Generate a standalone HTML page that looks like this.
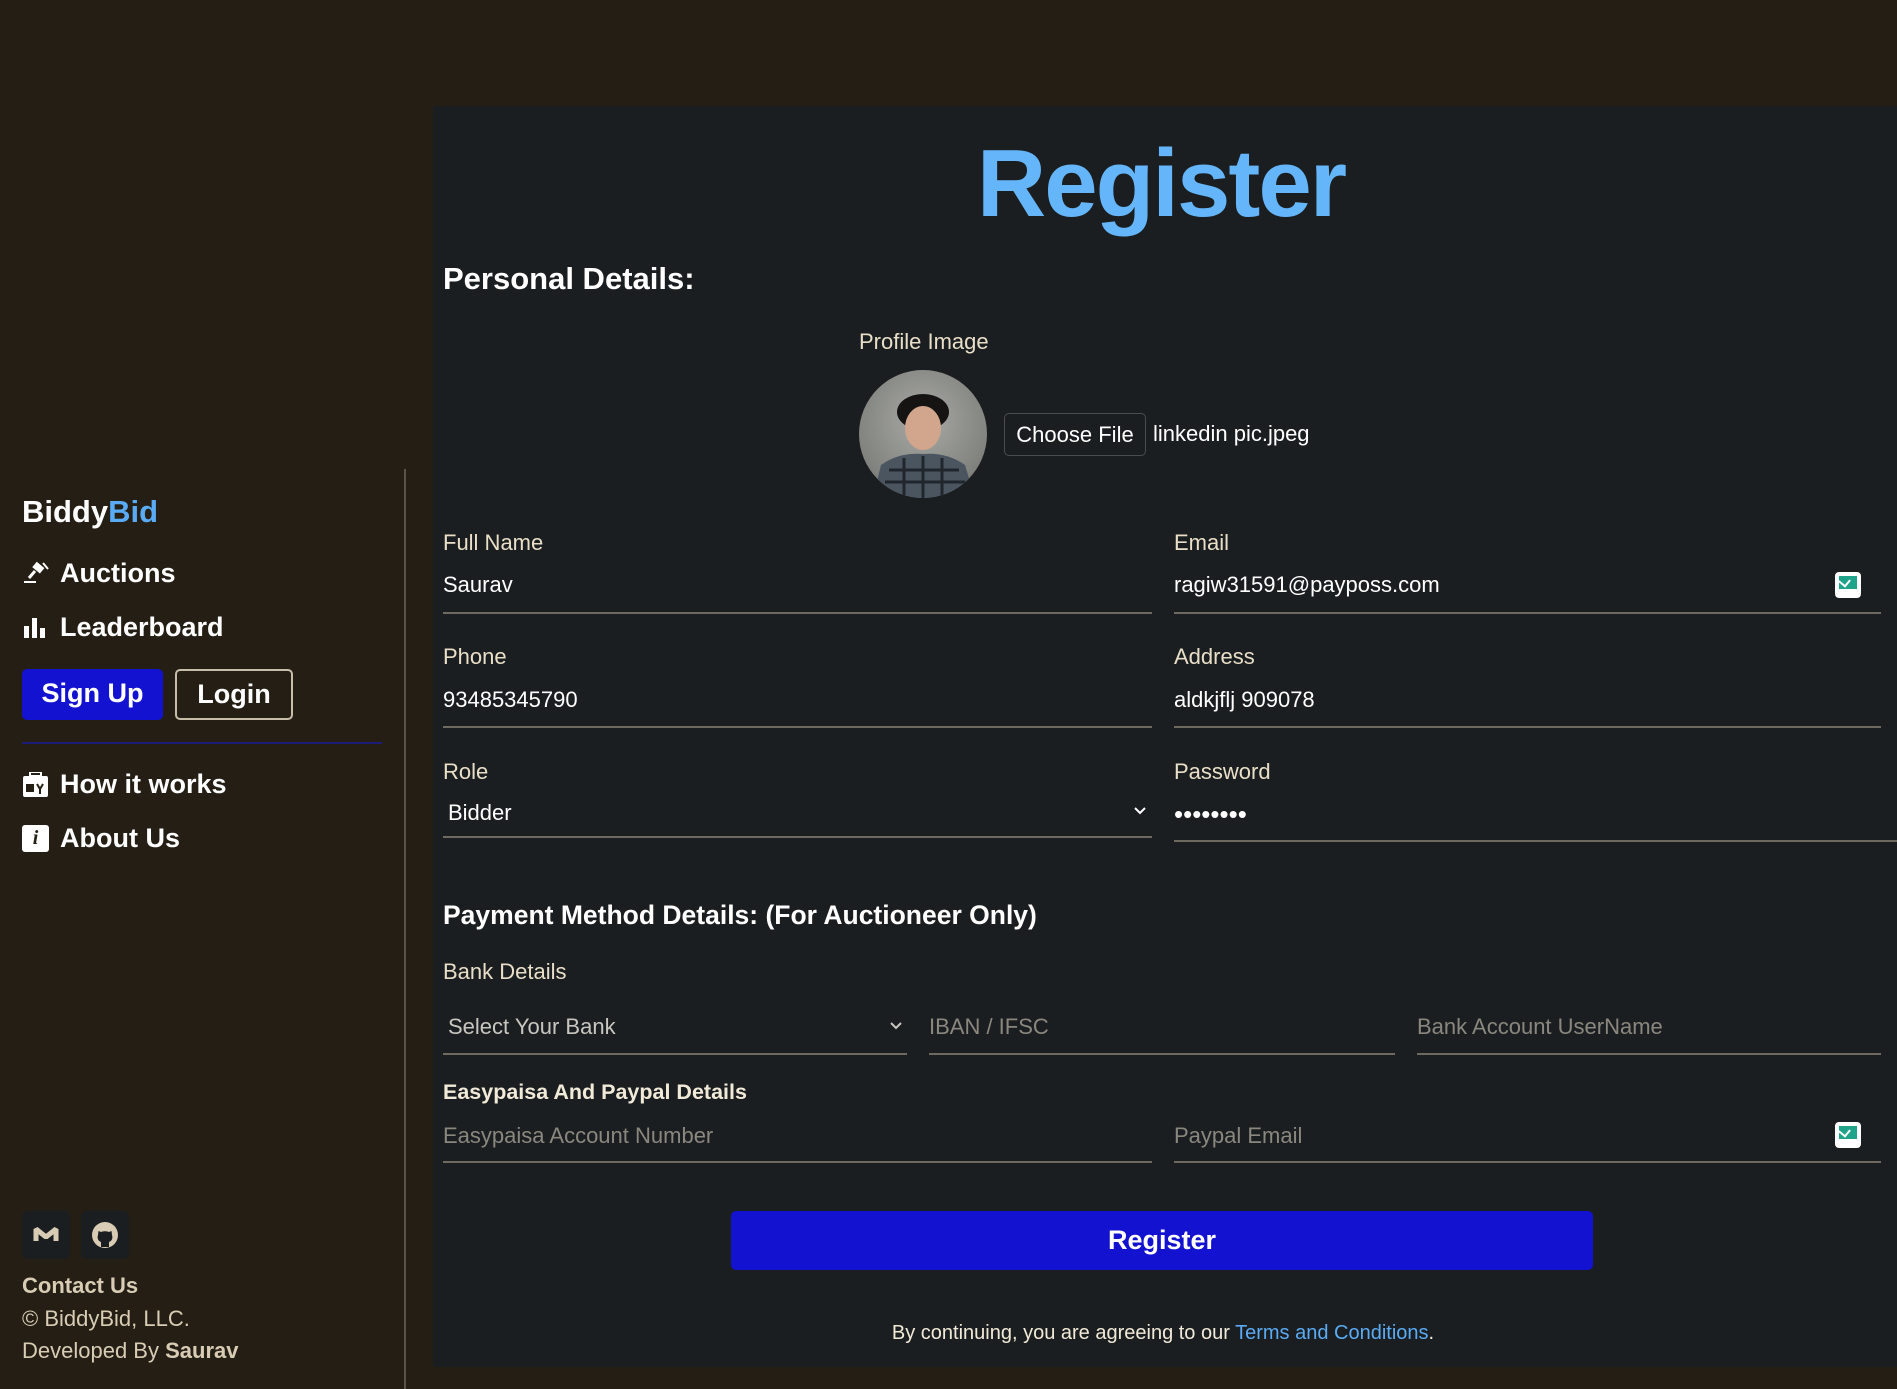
<!DOCTYPE html>
<html><head><meta charset="utf-8"><style>
*{margin:0;padding:0;box-sizing:border-box}
body{width:1897px;height:1389px;background:#241e14;font-family:"Liberation Sans",sans-serif;position:relative;overflow:hidden;color:#e9dfc8}
.a{position:absolute;white-space:nowrap}
.main{position:absolute;left:433px;top:106px;width:1464px;height:1261px;background:#1b1e20}
.lbl{font-size:22px;color:#e9dfc8;line-height:26px}
.val{font-size:22px;color:#fff;line-height:26px}
.ph{font-size:22px;color:#8a877f;line-height:26px}
.ul{position:absolute;height:2px;background:#6e6a60}
.nav{font-size:27px;font-weight:bold;color:#fff;line-height:32px}
.mail{position:absolute;width:26px;height:26px;background:#fff;border-radius:4px}
.mail:before{content:"";position:absolute;left:4px;top:4px;width:18px;height:13px;background:#1fa38a}
.mail:after{content:"";position:absolute;left:9px;top:3px;width:7px;height:7px;border-right:2px solid #fff;border-bottom:2px solid #fff;transform:rotate(40deg);transform-origin:0 0}
</style></head><body>
<div style="position:absolute;left:404px;top:469px;width:2px;height:920px;background:#5a5448"></div>
<div class="a" style="left:22px;top:492px;font-size:31px;font-weight:bold;color:#fff;line-height:40px">Biddy<span style="color:#5aabf5">Bid</span></div>
<svg class="a" style="left:23px;top:561px" width="26" height="24" viewBox="0 0 26 24"><rect x="10" y="3" width="10" height="7" fill="#fff" transform="rotate(40 15 7)"/><path d="M12 10 L6 17" stroke="#fff" stroke-width="3"/><rect x="1" y="20" width="12" height="2" fill="#fff"/><path d="M20 2 L25 8" stroke="#fff" stroke-width="2"/></svg>
<div class="a nav" style="left:60px;top:557px">Auctions</div>
<svg class="a" style="left:23px;top:616px" width="24" height="22"><rect x="1" y="10" width="5" height="12" fill="#fff"/><rect x="9" y="2" width="5" height="20" fill="#fff"/><rect x="17" y="12" width="5" height="10" fill="#fff"/></svg>
<div class="a nav" style="left:60px;top:611px">Leaderboard</div>
<div class="a" style="left:22px;top:669px;width:141px;height:51px;background:#1212d0;border-radius:5px;font-size:27px;font-weight:bold;color:#fff;text-align:center;line-height:49px">Sign Up</div>
<div class="a" style="left:175px;top:669px;width:118px;height:51px;border:2px solid #c8bda8;border-radius:5px;font-size:27px;font-weight:bold;color:#fff;text-align:center;line-height:47px">Login</div>
<div class="a" style="left:22px;top:742px;width:360px;height:2px;background:#1d1d78"></div>
<svg class="a" style="left:22px;top:772px" width="27" height="25"><rect x="8" y="0" width="11" height="4" fill="none" stroke="#fff" stroke-width="2"/><rect x="1" y="4" width="25" height="21" rx="2" fill="#fff"/><rect x="4" y="12" width="8" height="8" fill="#241e14"/><path d="M15 12 L18 17 L21 12 M18 17 V22" stroke="#241e14" stroke-width="2" fill="none"/></svg>
<div class="a nav" style="left:60px;top:768px">How it works</div>
<div class="a" style="left:22px;top:825px;width:27px;height:27px;background:#fff;border-radius:3px;color:#241e14;font:italic bold 20px 'Liberation Serif',serif;text-align:center;line-height:27px">i</div>
<div class="a nav" style="left:60px;top:822px">About Us</div>
<div class="a" style="left:22px;top:1211px;width:48px;height:48px;background:#1b1e20;border-radius:5px"><svg width="48" height="48"><path d="M14 30 V18 L24 26 L34 18 V30" stroke="#d8ccb4" stroke-width="5" fill="none" stroke-linejoin="bevel"/></svg></div>
<div class="a" style="left:81px;top:1211px;width:48px;height:48px;background:#1b1e20;border-radius:5px"><svg width="48" height="48" viewBox="0 0 48 48"><circle cx="24" cy="24" r="13" fill="#d8ccb4"/><path d="M20 36 V31 C17 30 16 27 17 24 L17.5 20 L20 21 C22.5 20 25.5 20 28 21 L30.5 20 L31 24 C32 27 31 30 28 31 V36Z" fill="#1b1e20"/></svg></div>
<div class="a" style="left:22px;top:1272px;font-size:22px;font-weight:bold;color:#d8ccb4;line-height:28px">Contact Us</div>
<div class="a" style="left:22px;top:1305px;font-size:22px;color:#d8ccb4;line-height:28px">© BiddyBid, LLC.</div>
<div class="a" style="left:22px;top:1337px;font-size:22px;color:#d8ccb4;line-height:28px">Developed By <b>Saurav</b></div>

<div class="main"></div>
<div class="a" style="left:961px;top:124px;width:400px;text-align:center;font-size:96px;font-weight:bold;color:#64b5fa;line-height:120px;letter-spacing:-2px">Register</div>
<div class="a" style="left:443px;top:259px;font-size:31px;font-weight:bold;color:#fff;line-height:40px">Personal Details:</div>
<div class="a lbl" style="left:859px;top:329px">Profile Image</div>
<div class="a" style="left:859px;top:370px;width:128px;height:128px;border-radius:50%;background:radial-gradient(circle at 50% 40%,#a9aaa6,#6e706c);overflow:hidden">
<svg width="128" height="128"><ellipse cx="64" cy="42" rx="26" ry="18" fill="#161412"/><ellipse cx="64" cy="58" rx="18" ry="22" fill="#d2a68c"/><path d="M14 128 L22 95 Q40 82 64 84 Q88 82 106 95 L116 128Z" fill="#4a5560"/><path d="M30 100 H100 M26 112 H106 M45 88 V128 M64 86 V128 M83 88 V128" stroke="#20262c" stroke-width="3"/></svg></div>
<div class="a" style="left:1004px;top:413px;width:142px;height:43px;border:1px solid #4a4c4e;border-radius:5px;background:#1b1e20;font-size:22px;color:#fff;text-align:center;line-height:41px">Choose File</div>
<div class="a val" style="left:1153px;top:421px">linkedin pic.jpeg</div>

<div class="a lbl" style="left:443px;top:530px">Full Name</div>
<div class="a val" style="left:443px;top:572px">Saurav</div>
<div class="ul" style="left:443px;top:612px;width:709px"></div>
<div class="a lbl" style="left:1174px;top:530px">Email</div>
<div class="a val" style="left:1174px;top:572px">ragiw31591@payposs.com</div>
<div class="mail" style="left:1835px;top:572px"></div>
<div class="ul" style="left:1174px;top:612px;width:707px"></div>

<div class="a lbl" style="left:443px;top:644px">Phone</div>
<div class="a val" style="left:443px;top:687px">93485345790</div>
<div class="ul" style="left:443px;top:726px;width:709px"></div>
<div class="a lbl" style="left:1174px;top:644px">Address</div>
<div class="a val" style="left:1174px;top:687px">aldkjflj 909078</div>
<div class="ul" style="left:1174px;top:726px;width:707px"></div>

<div class="a lbl" style="left:443px;top:759px">Role</div>
<div class="a val" style="left:448px;top:800px">Bidder</div>
<svg class="a" style="left:1133px;top:806px" width="14" height="10"><path d="M2 2 L7 7 L12 2" stroke="#fff" stroke-width="2" fill="none"/></svg>
<div class="ul" style="left:443px;top:836px;width:709px"></div>
<div class="a lbl" style="left:1174px;top:759px">Password</div>
<div class="a val" style="left:1174px;top:801px;font-size:26px;letter-spacing:0px">••••••••</div>
<div class="ul" style="left:1174px;top:840px;width:723px"></div>

<div class="a" style="left:443px;top:898px;font-size:26.5px;font-weight:bold;color:#fff;line-height:34px">Payment Method Details: (For Auctioneer Only)</div>
<div class="a lbl" style="left:443px;top:959px">Bank Details</div>
<div class="a" style="left:448px;top:1014px;font-size:22px;color:#c8c6c0;line-height:26px">Select Your Bank</div>
<svg class="a" style="left:889px;top:1021px" width="14" height="10"><path d="M2 2 L7 7 L12 2" stroke="#c8c6c0" stroke-width="2" fill="none"/></svg>
<div class="ul" style="left:443px;top:1053px;width:464px"></div>
<div class="a ph" style="left:929px;top:1014px">IBAN / IFSC</div>
<div class="ul" style="left:929px;top:1053px;width:466px"></div>
<div class="a ph" style="left:1417px;top:1014px">Bank Account UserName</div>
<div class="ul" style="left:1417px;top:1053px;width:464px"></div>

<div class="a" style="left:443px;top:1079px;font-size:21.5px;font-weight:bold;color:#f2ead8;line-height:26px">Easypaisa And Paypal Details</div>
<div class="a ph" style="left:443px;top:1123px">Easypaisa Account Number</div>
<div class="ul" style="left:443px;top:1161px;width:709px"></div>
<div class="a ph" style="left:1174px;top:1123px">Paypal Email</div>
<div class="mail" style="left:1835px;top:1122px"></div>
<div class="ul" style="left:1174px;top:1161px;width:707px"></div>

<div class="a" style="left:731px;top:1211px;width:862px;height:59px;background:#1212d0;border-radius:5px;font-size:27px;font-weight:bold;color:#fff;text-align:center;line-height:59px">Register</div>
<div class="a" style="left:733px;top:1320px;width:860px;text-align:center;font-size:20px;color:#f2ead8;line-height:26px">By continuing, you are agreeing to our <span style="color:#5aabf5">Terms and Conditions</span>.</div>
</body></html>
